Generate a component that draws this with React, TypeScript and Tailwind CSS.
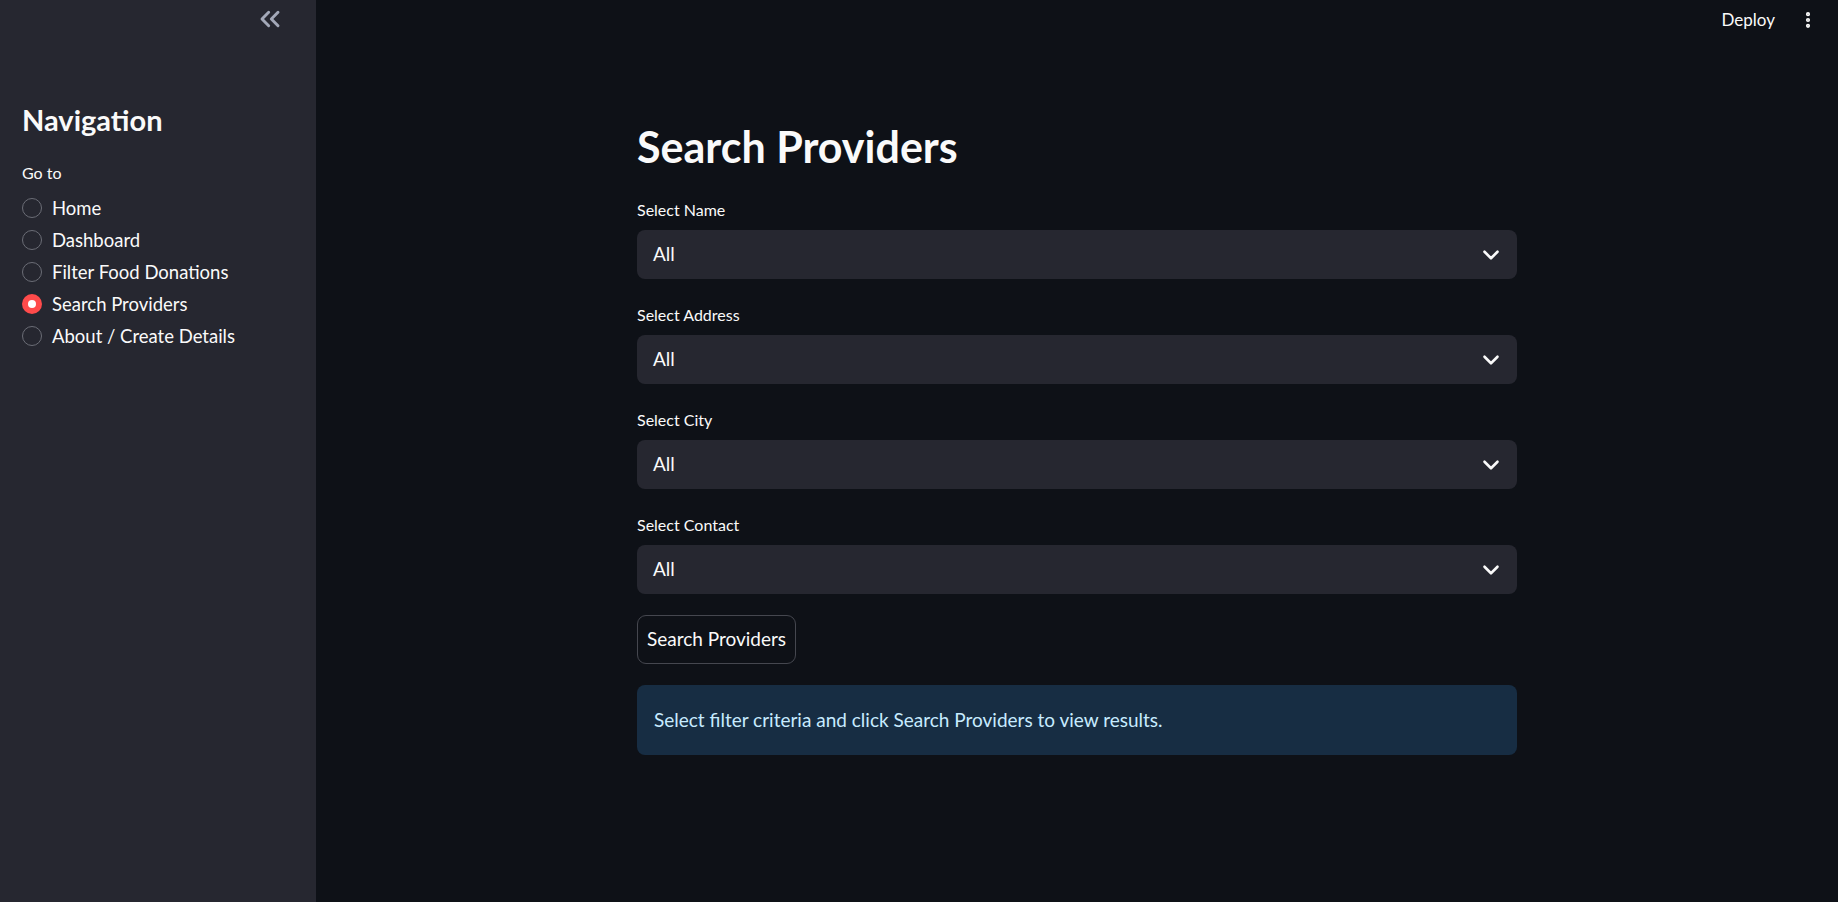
import { ChevronDown, ChevronsLeft, EllipsisVertical } from 'lucide-react';

const font = { fontFamily: 'Lato, "Noto Sans", sans-serif' };

const pages = ['Home', 'Dashboard', 'Filter Food Donations', 'Search Providers', 'About / Create Details'];
const filters = ['Select Name', 'Select Address', 'Select City', 'Select Contact'];

function Radio({ label, active }: { label: string; active?: boolean }) {
  return (
    <div className="flex h-[32px] items-center gap-[10px]">
      {active ? (
        <span className="flex h-[20px] w-[20px] items-center justify-center rounded-full bg-[#ff4b4b]">
          <span className="h-[8px] w-[8px] rounded-full bg-white" />
        </span>
      ) : (
        <span className="h-[20px] w-[20px] rounded-full border-[1.5px] border-[#6b6d76]" />
      )}
      <span className="text-[18.5px] leading-[24px] text-[#fafafa]">{label}</span>
    </div>
  );
}

export default function App() {
  return (
    <div className="flex h-[902px] w-full overflow-hidden bg-[#0e1117] text-[#fafafa]" style={font}>
      {/* Sidebar */}
      <aside className="flex w-[316px] shrink-0 flex-col bg-[#262730] px-[22px]">
        <div className="flex h-[38px] items-center justify-end pr-[8px]">
          <ChevronsLeft className="h-[32px] w-[32px] text-[#a3a8b8]" strokeWidth={2.2} />
        </div>
        <h2 className="mt-[64px] text-[29px] font-bold leading-[35px]">Navigation</h2>
        <div className="mt-[26px] text-[16px] leading-[20px]">Go to</div>
        <div className="mt-[9px] flex flex-col">
          {pages.map((p) => (
            <Radio key={p} label={p} active={p === 'Search Providers'} />
          ))}
        </div>
      </aside>

      {/* Main */}
      <main className="flex flex-1 flex-col">
        <header className="flex h-[40px] items-center justify-end gap-[23px] pr-[20px]">
          <span className="text-[17px]">Deploy</span>
          <EllipsisVertical className="h-[20px] w-[20px]" strokeWidth={3} />
        </header>

        <div className="mx-auto mt-[81px] flex w-[880px] flex-col">
          <h1 className="text-[43px] font-bold leading-[52px]">Search Providers</h1>

          <div className="mt-[27px] flex flex-col gap-[26px]">
            {filters.map((f) => (
              <div key={f} className="flex flex-col">
                <label className="text-[16px] leading-[20px]">{f}</label>
                <div className="mt-[10px] flex h-[49px] items-center justify-between rounded-[8px] bg-[#262730] pl-[16px] pr-[13px]">
                  <span className="text-[19px]">All</span>
                  <ChevronDown className="h-[26px] w-[26px]" strokeWidth={2.4} />
                </div>
              </div>
            ))}
          </div>

          <button className="mt-[21px] h-[49px] w-[159px] rounded-[9px] border border-[#45474f] text-[19px]">
            Search Providers
          </button>

          <div className="mt-[21px] flex h-[70px] items-center rounded-[8px] bg-[#172d43] px-[17px] text-[19px] text-[#c7ebff]">
            Select filter criteria and click Search Providers to view results.
          </div>
        </div>
      </main>
    </div>
  );
}
